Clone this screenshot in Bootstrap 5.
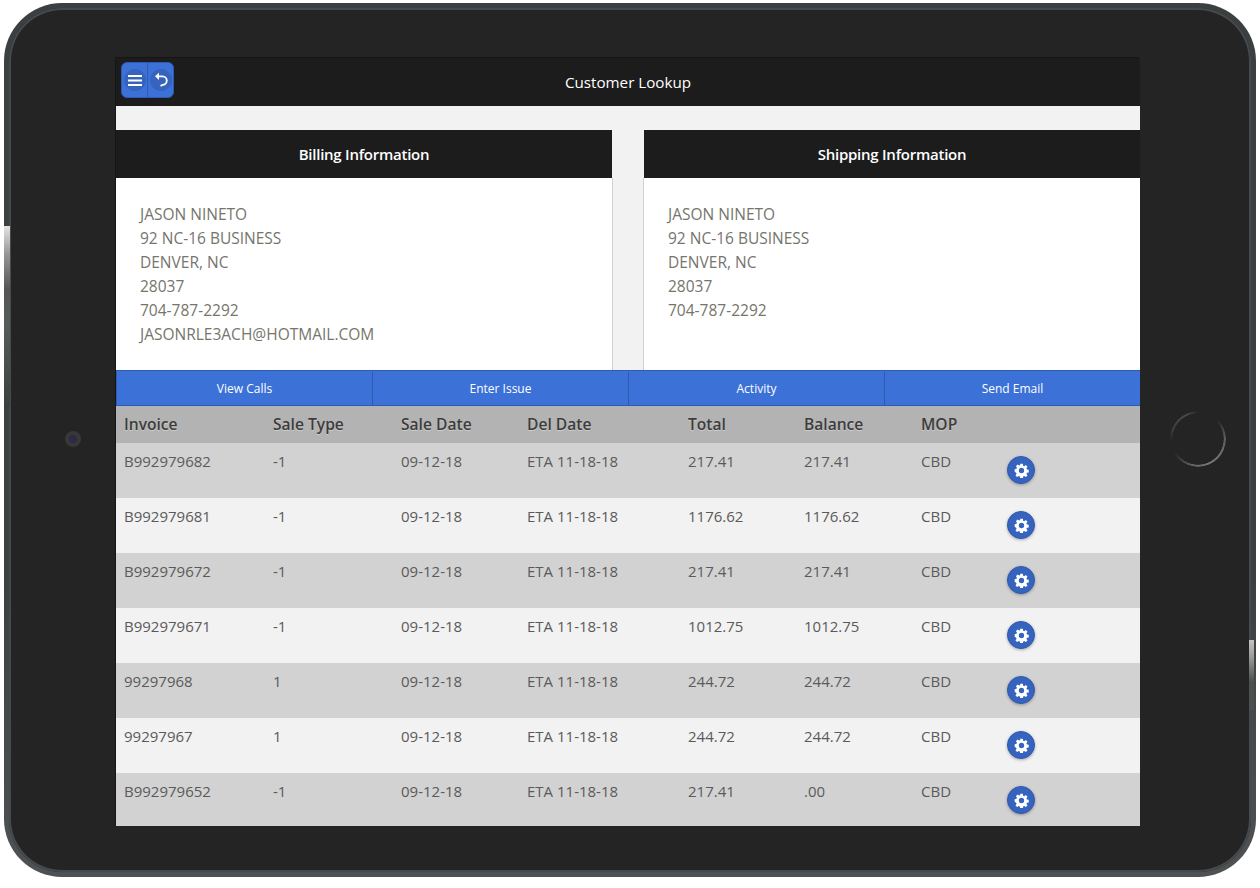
<!DOCTYPE html>
<html>
<head>
    <title>Customer Lookup</title>
    <link href="https://cdn.jsdelivr.net/npm/bootstrap@5.3.0/dist/css/bootstrap.min.css" rel="stylesheet">
    <style>
        html, body { height: 100%; }
        body { background: #fff; font-family: "Open Sans", "Noto Sans", sans-serif; margin: 0; overflow: hidden; }
        .device-wrap { padding: 3px 4px 11px 4px; width: 1260px; height: 888px; }
        .device { position: relative; width: 1252px; height: 874px; padding: 5px; border-radius: 58px; background: linear-gradient(180deg, #3b403f 0, #3b403f 65%, #4f5251 100%); }
        .device-inner { width: 100%; height: 100%; background: #242424; border-radius: 53px; box-shadow: inset 0 0 0 2px #454a52; padding: 50px 0 0 107px; }
        .side-left { position: absolute; left: 0; top: 223px; width: 6px; height: 180px; background: linear-gradient(180deg, #e4e4e4 0, #999 15%, #555 35%, #565c56 55%, #3b403f 100%); }
        .side-right { position: absolute; right: 2px; top: 637px; width: 5px; height: 70px; background: linear-gradient(180deg, #c4c4c4 0, #999 25%, #4a4f4f 60%, #4a4f4f 100%); }
        .device-cam { position: absolute; left: 61px; top: 428px; width: 16px; height: 16px; border-radius: 50%; background: #383838; padding: 4px; }
        .device-cam::after { content: ""; display: block; width: 8px; height: 8px; border-radius: 50%; background: #2d2a45; }
        .device-home { position: absolute; left: 1166px; top: 408px; width: 56px; height: 56px; border-radius: 50%;
            background: conic-gradient(transparent 0 45deg, #5c5c5c 85deg, #777 150deg, #666 190deg, transparent 240deg 265deg, #3e3e3e 290deg, #4a4a4a 335deg, transparent 360deg);
            -webkit-mask: radial-gradient(closest-side, transparent calc(100% - 2.6px), #000 calc(100% - 2px));
            mask: radial-gradient(closest-side, transparent calc(100% - 2.6px), #000 calc(100% - 2px)); }
        .screen { width: 1024px; height: 768px; background: #f2f2f2; overflow: hidden; box-shadow: -1px -1px 0 #151515; }
        .top-bar { height: 48px; background: #1c1c1c; color: #fff; font-size: 15.2px; position: relative; }
        .top-btns { position: absolute; left: 5px; top: 4px; height: 36px; width: 53px; background: #3c71d8; border: 1px solid #2f5ab0; border-radius: 6px; }
        .top-btn { width: 26px; }
        .top-btn + .top-btn { border-left: 1px solid #2f5ab0; }
        .top-btn span { width: 22px; height: 22px; border-radius: 50%; background: #3563be; }
        .addr-row { padding-top: 24px; gap: 32px; height: 264px; }
        .addr-card { width: 496px; }
        .addr-head { height: 48px; padding-top: 1px; background: #1c1c1c; color: #fff; font-size: 15px; font-weight: 600; letter-spacing: -.25px; }
        .addr-body { height: 192px; background: #fff; padding: 24px 24px 0; color: #75756b; font-size: 15.5px; line-height: 24px; box-shadow: 1px 0 0 #d0d0d0; }
        .addr-card + .addr-card .addr-body { box-shadow: -1px 0 0 #d0d0d0; }
        .act-bar { height: 36px; padding-top: 1px; background: #3c71d8; border-top: 1px solid #2f5ab0; border-bottom: 1px solid #2f5ab0; border-left: 1px solid #2f5ab0; }
        .act-btn { flex: 0 0 256px; color: #fff; font-size: 12px; border-right: 1px solid #2f5ab0; }
        .act-btn:last-child { flex: 1 1 auto; border-right: 0; }
        .inv-table { table-layout: fixed; width: 1024px; margin: 0; font-size: 15px; }
        .inv-table th, .inv-table td { padding: 8px 8px 7px; border: 0; background: transparent; color: #5a5a5a; box-shadow: none; }
        .inv-table th { height: 37px; background: #b3b3b3; font-size: 15.6px; font-weight: 600; color: #3c3c3c; padding: 0 8px; vertical-align: middle; text-shadow: 0 1px 0 rgba(255,255,255,.35); }
        .inv-table td { height: 55px; vertical-align: top; line-height: 20px; }
        .inv-table tr:nth-child(odd) td { background: #d2d2d2; }
        .inv-table tr:nth-child(even) td { background: #f2f2f2; }
        .gear-btn { width: 28px; height: 28px; margin-top: 5px; border-radius: 50%; background: #3563be; border: 1px solid #2f5ab0; box-shadow: 0 1px 3px rgba(0,0,0,.3); }
    </style>
</head>
<body>
<div class="device-wrap">
    <div class="device">
        <div class="side-left"></div>
        <div class="side-right"></div>
        <div class="device-cam"></div>
        <div class="device-home"></div>
        <div class="device-inner">
            <div class="screen">
                <div class="top-bar d-flex align-items-center justify-content-center">
                    <div class="top-btns d-flex">
                        <div class="top-btn d-flex align-items-center justify-content-center">
                            <span class="d-flex align-items-center justify-content-center">
                                <svg width="14" height="11" viewBox="0 0 14 11"><path d="M0 1h14M0 5.5h14M0 10h14" stroke="#fff" stroke-width="2"/></svg>
                            </span>
                        </div>
                        <div class="top-btn d-flex align-items-center justify-content-center">
                            <span class="d-flex align-items-center justify-content-center">
                                <svg width="14" height="16" viewBox="0 0 14 16"><path d="M1 4.3 5 .7v7.2z" fill="#fff"/><path d="M4 4.3h4.5a4.3 4.3 0 0 1 0 8.6L6.500 14" fill="none" stroke="#fff" stroke-width="1.8"/></svg>
                            </span>
                        </div>
                    </div>
                    Customer Lookup
                </div>
                <div class="addr-row d-flex">
                    <div class="addr-card">
                        <div class="addr-head d-flex align-items-center justify-content-center">Billing Information</div>
                        <div class="addr-body">JASON NINETO<br>92 NC-16 BUSINESS<br>DENVER, NC<br>28037<br>704-787-2292<br>JASONRLE3ACH@HOTMAIL.COM</div>
                    </div>
                    <div class="addr-card">
                        <div class="addr-head d-flex align-items-center justify-content-center">Shipping Information</div>
                        <div class="addr-body">JASON NINETO<br>92 NC-16 BUSINESS<br>DENVER, NC<br>28037<br>704-787-2292</div>
                    </div>
                </div>
                <div class="act-bar d-flex">
                    <div class="act-btn d-flex align-items-center justify-content-center">View Calls</div>
                    <div class="act-btn d-flex align-items-center justify-content-center">Enter Issue</div>
                    <div class="act-btn d-flex align-items-center justify-content-center">Activity</div>
                    <div class="act-btn d-flex align-items-center justify-content-center">Send Email</div>
                </div>
                <table class="table inv-table" id="invTable">
                    <colgroup>
                        <col style="width:149px"><col style="width:128px"><col style="width:126px"><col style="width:161px"><col style="width:116px"><col style="width:117px"><col style="width:86px"><col style="width:141px">
                    </colgroup>
                    <thead>
                        <tr><th>Invoice</th><th>Sale Type</th><th>Sale Date</th><th>Del Date</th><th>Total</th><th>Balance</th><th>MOP</th><th></th></tr>
                    </thead>
                    <tbody></tbody>
                </table>
            </div>
        </div>
    </div>
</div>
<script>
    const invoices = [
        ['B992979682', '-1', '217.41', '217.41'],
        ['B992979681', '-1', '1176.62', '1176.62'],
        ['B992979672', '-1', '217.41', '217.41'],
        ['B992979671', '-1', '1012.75', '1012.75'],
        ['99297968', '1', '244.72', '244.72'],
        ['99297967', '1', '244.72', '244.72'],
        ['B992979652', '-1', '217.41', '.00']
    ];
    const gear = '<svg width="15" height="15" viewBox="-1 -1 18 18"><path fill="#fff" fill-rule="evenodd" d="M6.4 0h3.200l.4 2.200 1.300.6 1.900-1.300 2 2-1.300 1.900.6 1.300 2.200.4v3.200l-2.200.4-.6 1.300 1.300 1.900-2 2-1.900-1.300-1.300.6-.4 2.200H6.400l-.4-2.200-1.300-.6-1.900 1.300-2-2 1.300-1.900-.6-1.300L-.2 9.600V6.400l2.200-.4.6-1.300-1.300-1.900 2-2 1.900 1.300 1.300-.6zM8 4.800a3.200 3.200 0 1 0 0 6.400 3.200 3.200 0 0 0 0-6.400z"/></svg>';
    document.querySelector('#invTable tbody').innerHTML = invoices.map(r => `
        <tr><td>${r[0]}</td><td>${r[1]}</td><td>09-12-18</td><td>ETA 11-18-18</td><td>${r[2]}</td><td>${r[3]}</td><td>CBD</td>
        <td><div class="gear-btn d-flex align-items-center justify-content-center">${gear}</div></td></tr>`).join('');
</script>
<script src="https://cdn.jsdelivr.net/npm/bootstrap@5.3.0/dist/js/bootstrap.bundle.min.js"></script>
</body>
</html>
